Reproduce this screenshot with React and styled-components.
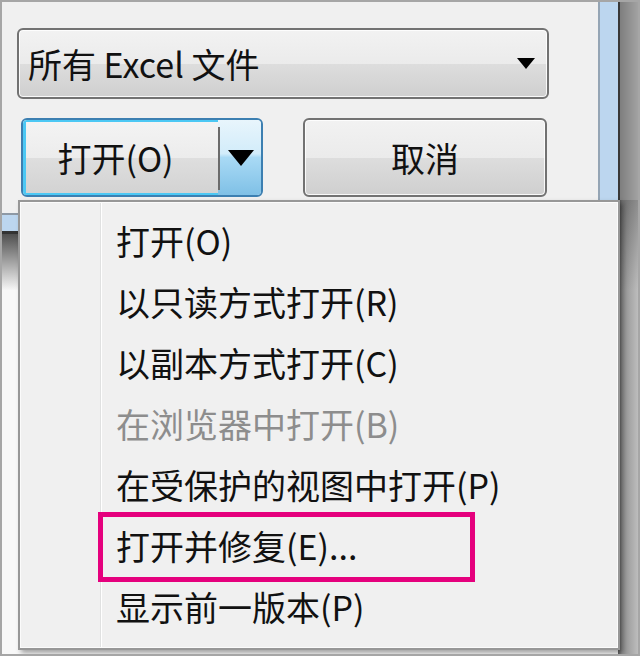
import React from 'react';
import styled, { createGlobalStyle } from 'styled-components';

const GlobalStyle = createGlobalStyle`
    body {
        margin: 0;
        background: #ffffff;
    }
`;

// Whole captured region
const Screen = styled.div`
    position: relative;
    width: 640px;
    height: 656px;
    box-sizing: border-box;
    border: 2px solid #a6a6a6;
    display: flex;
    overflow: hidden;
    background: #f8f8f8;
    font-family: "Noto Sans CJK SC", "Noto Sans", sans-serif;
    color: #111111;
`;

const WindowArea = styled.div`
    flex: 1;
    display: flex;
    flex-direction: column;
`;

const DialogRow = styled.div`
    display: flex;
    height: 213px;
`;

const Panel = styled.div`
    flex: 1;
    box-sizing: border-box;
    padding: 26px 0 0 15px;
    background: #f0f0f0;
    border-bottom: 2px solid #8e99a5;
`;

const RightFrame = styled.div`
    width: 20px;
    box-sizing: border-box;
    background: #bcd6ef;
    border-left: 2px solid #95a5b5;
`;

const BlueBand = styled.div`
    height: 16px;
    background: #bcd6ef;
    border-bottom: 3px solid #333333;
`;

const Fade = styled.div`
    height: 56px;
    background: linear-gradient(to bottom, #4f4f4f, #f6f6f6);
`;

const EdgeColumn = styled.div`
    width: 20px;
    display: flex;
    flex-direction: column;
`;

const EdgeTop = styled.div`
    height: 198px;
    background: linear-gradient(to right, #383838 0, #383838 2px, #7e7e7e 2px, #a2a2a2 100%);
`;

const EdgeBottom = styled.div`
    flex: 1;
    background:
        linear-gradient(to bottom, rgba(0, 0, 0, 0.25), rgba(0, 0, 0, 0) 90px),
        linear-gradient(to right, #5e5e5e 0, #8f8f8f 4px, #bdbdbd 100%);
`;

const greyFace = `
    background: linear-gradient(to bottom, #f2f2f2 0%, #ebebeb 50%, #dddddd 51%, #cfcfcf 100%);
    box-shadow: inset 0 0 0 1px rgba(255, 255, 255, 0.85);
`;

const ComboBox = styled.div`
    width: 532px;
    height: 71px;
    box-sizing: border-box;
    border: 2px solid #727272;
    border-radius: 6px;
    ${greyFace}
    display: flex;
    align-items: center;
    justify-content: space-between;
    padding: 0 12px 0 9px;
    font-size: 34px;
`;

const SmallArrow = styled.span`
    width: 0;
    height: 0;
    border-left: 9px solid transparent;
    border-right: 9px solid transparent;
    border-top: 11px solid #000000;
`;

const ButtonRow = styled.div`
    display: flex;
    gap: 40px;
    margin-top: 19px;
    padding-left: 4px;
`;

const SplitButton = styled.div`
    width: 242px;
    height: 79px;
    box-sizing: border-box;
    display: flex;
    border: 2px solid #3c7fb1;
    border-radius: 6px;
    overflow: hidden;
`;

const SplitMain = styled.div`
    flex: 1;
    display: flex;
    align-items: center;
    justify-content: center;
    padding-right: 10px;
    font-size: 34px;
    background: linear-gradient(to bottom, #f4f4f4 0%, #ececec 50%, #dedede 51%, #d2d2d2 100%);
    box-shadow: inset 3px 2px 0 #4cc8f4, inset 0 -2px 0 #4cc8f4;
`;

const SplitDrop = styled.div`
    position: relative;
    width: 43px;
    display: flex;
    align-items: center;
    justify-content: center;
    padding-left: 2px;
    box-sizing: border-box;
    background: linear-gradient(to bottom, #e8f5fc 0%, #d2ecfa 45%, #a9daf5 50%, #7fc0e6 100%);

    &::before {
        content: "";
        position: absolute;
        left: 0;
        top: 7px;
        bottom: 5px;
        width: 2px;
        background: #6b6b6b;
    }
`;

const BigArrow = styled.span`
    width: 0;
    height: 0;
    border-left: 13px solid transparent;
    border-right: 13px solid transparent;
    border-top: 16px solid #000000;
`;

const Button = styled.div`
    width: 244px;
    height: 79px;
    box-sizing: border-box;
    border: 2px solid #727272;
    border-radius: 6px;
    ${greyFace}
    display: flex;
    align-items: center;
    justify-content: center;
    font-size: 34px;
`;

// Drop-down menu laid over the dialog
const Menu = styled.div`
    position: absolute;
    top: 198px;
    left: 16px;
    width: 602px;
    height: 450px;
    box-sizing: border-box;
    border: 2px solid #979797;
    padding: 8px 0;
    background:
        linear-gradient(to right, transparent 80px, #e0e1e1 80px, #e0e1e1 81px, #ffffff 81px, #ffffff 82px, transparent 82px),
        #f0f0f0;
    box-shadow: inset 0 0 0 1px #fbfbfb, 3px 3px 5px rgba(0, 0, 0, 0.35);
`;

const MenuItem = styled.div`
    position: relative;
    height: 61px;
    line-height: 61px;
    padding-left: 96px;
    font-size: 34px;
    white-space: nowrap;
    color: ${p => (p.$disabled ? '#8d8d8d' : '#111111')};
`;

const Highlight = styled.span`
    position: absolute;
    left: 78px;
    top: -3px;
    width: 377px;
    height: 70px;
    box-sizing: border-box;
    border: 5px solid #e5007d;
    pointer-events: none;
`;

const items = [
    { label: '打开(O)' },
    { label: '以只读方式打开(R)' },
    { label: '以副本方式打开(C)' },
    { label: '在浏览器中打开(B)', disabled: true },
    { label: '在受保护的视图中打开(P)' },
    { label: '打开并修复(E)...', marked: true },
    { label: '显示前一版本(P)' },
];

const App = () => {
    return (
        <>
            <GlobalStyle />
            <Screen>
                <WindowArea>
                    <DialogRow>
                        <Panel>
                            <ComboBox>
                                <span>所有 Excel 文件</span>
                                <SmallArrow />
                            </ComboBox>
                            <ButtonRow>
                                <SplitButton>
                                    <SplitMain>打开(O)</SplitMain>
                                    <SplitDrop>
                                        <BigArrow />
                                    </SplitDrop>
                                </SplitButton>
                                <Button>取消</Button>
                            </ButtonRow>
                        </Panel>
                        <RightFrame />
                    </DialogRow>
                    <BlueBand />
                    <Fade />
                </WindowArea>
                <EdgeColumn>
                    <EdgeTop />
                    <EdgeBottom />
                </EdgeColumn>

                <Menu>
                    {items.map(item => (
                        <MenuItem key={item.label} $disabled={item.disabled}>
                            {item.label}
                            {item.marked && <Highlight />}
                        </MenuItem>
                    ))}
                </Menu>
            </Screen>
        </>
    );
};

export default App;
